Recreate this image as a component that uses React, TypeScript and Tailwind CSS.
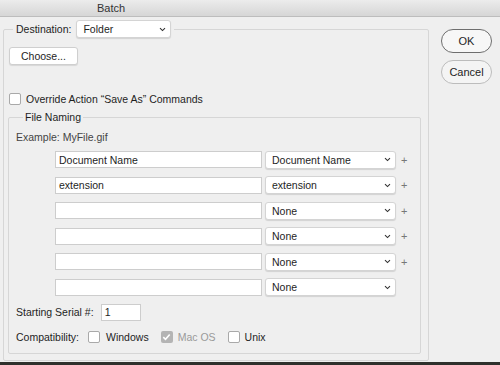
const font = { fontFamily: '"Liberation Sans", Arial, sans-serif' };

function Chevron() {
  return (
    <svg width="7" height="5" viewBox="0 0 7 5" className="shrink-0">
      <path d="M1 1.2 L3.5 3.6 L6 1.2" fill="none" stroke="#333" strokeWidth="1.1" />
    </svg>
  );
}

function Select({ value, className }: { value: string; className: string }) {
  return (
    <div
      className={`flex items-center justify-between rounded-[3px] border border-[#d4d4d4] bg-white pl-[6px] pr-[4px] shadow-[0_1px_1px_rgba(0,0,0,0.12)] ${className}`}
    >
      <span className="text-[#1e1e1e]">{value}</span>
      <Chevron />
    </div>
  );
}

function Check({ checked, disabled }: { checked?: boolean; disabled?: boolean }) {
  if (checked) {
    return (
      <span className="flex h-[12px] w-[12px] shrink-0 items-center justify-center rounded-[2px] bg-[#b4b4b4]">
        <svg width="9" height="8" viewBox="0 0 9 8">
          <path d="M1.3 4.2 L3.5 6.3 L7.7 1.4" fill="none" stroke="#fff" strokeWidth="1.6" />
        </svg>
      </span>
    );
  }
  return (
    <span
      className={`block h-[12px] w-[12px] shrink-0 rounded-[2px] border bg-white ${disabled ? "border-[#ccc]" : "border-[#a9a9a9]"}`}
    />
  );
}

const rows = [
  { text: "Document Name", sel: "Document Name", plus: true },
  { text: "extension", sel: "extension", plus: true },
  { text: "", sel: "None", plus: true },
  { text: "", sel: "None", plus: true },
  { text: "", sel: "None", plus: true },
  { text: "", sel: "None", plus: false },
];

export default function App() {
  return (
    <div className="flex h-[365px] w-[500px] flex-col overflow-hidden bg-[#2f302c] text-[10.5px] leading-[14px] text-[#1e1e1e]" style={font}>
      <div className="flex h-[362px] flex-col bg-[#efefef]">
        <div className="flex h-[17px] shrink-0 items-center border-b border-[#bdbdbd] bg-gradient-to-b from-[#ececec] to-[#d6d6d6] pl-[97px] text-[11px] text-[#333]">
          Batch
        </div>

        <div className="flex">
          <fieldset className="ml-[3px] mt-[3px] h-[341px] w-[426px] rounded-[2px] border border-[#d6d6d6] px-0 pb-0">
            <legend className="ml-[9px] flex items-center px-[3px]">
              <span className="mr-[5px]">Destination:</span>
              <Select value="Folder" className="h-[18px] w-[95px]" />
            </legend>

            <button className="ml-[5px] mt-[9px] flex h-[18px] w-[69px] items-center justify-center rounded-[3px] border border-[#cfcfcf] bg-white shadow-[0_1px_1px_rgba(0,0,0,0.1)]">
              Choose...
            </button>

            <label className="ml-[5px] mt-[28px] flex h-[12px] items-center gap-[5px]">
              <Check />
              <span>Override Action “Save As” Commands</span>
            </label>

            <fieldset className="ml-[4px] mt-[5px] h-[244px] w-[413px] rounded-[2px] border border-[#d6d6d6] px-0 pb-0">
              <legend className="ml-[14px] px-[2px]">File Naming</legend>

              <div className="ml-[7px] mt-[6px] text-[#444]">Example: MyFile.gif</div>

              <div className="mt-[7px] flex flex-col gap-[8.6px]">
                {rows.map((r, i) => (
                  <div key={i} className="flex h-[17px] items-center">
                    <div className="ml-[46px] flex h-[17px] w-[207px] items-center border border-[#cdcdcd] bg-white pl-[3px]">
                      {r.text}
                    </div>
                    <Select value={r.sel} className="ml-[3px] h-[18px] w-[131px]" />
                    {r.plus ? <span className="ml-[5px] text-[11px] text-[#777]">+</span> : null}
                  </div>
                ))}
              </div>

              <div className="ml-[7px] mt-[8px] flex h-[17px] items-center">
                <span>Starting Serial #:</span>
                <div className="ml-[7px] flex h-[17px] w-[40px] items-center border border-[#cdcdcd] bg-white pl-[3px]">1</div>
              </div>

              <div className="ml-[7px] mt-[10px] flex h-[12px] items-center">
                <span>Compatibility:</span>
                <span className="ml-[9px]"><Check /></span>
                <span className="ml-[6px]">Windows</span>
                <span className="ml-[12px]"><Check checked /></span>
                <span className="ml-[5px] text-[#9a9a9a]">Mac OS</span>
                <span className="ml-[12px]"><Check /></span>
                <span className="ml-[5px]">Unix</span>
              </div>
            </fieldset>
          </fieldset>

          <div className="ml-[12px] mt-[12px] flex flex-col gap-[7px]">
            <button className="flex h-[24px] w-[51px] items-center justify-center rounded-full border border-[#6e6e6e] bg-[#f7f7f7] text-[11px]">
              OK
            </button>
            <button className="flex h-[24px] w-[51px] items-center justify-center rounded-full border border-[#bcbcbc] bg-[#f4f4f4] text-[11px]">
              Cancel
            </button>
          </div>
        </div>
      </div>
    </div>
  );
}
